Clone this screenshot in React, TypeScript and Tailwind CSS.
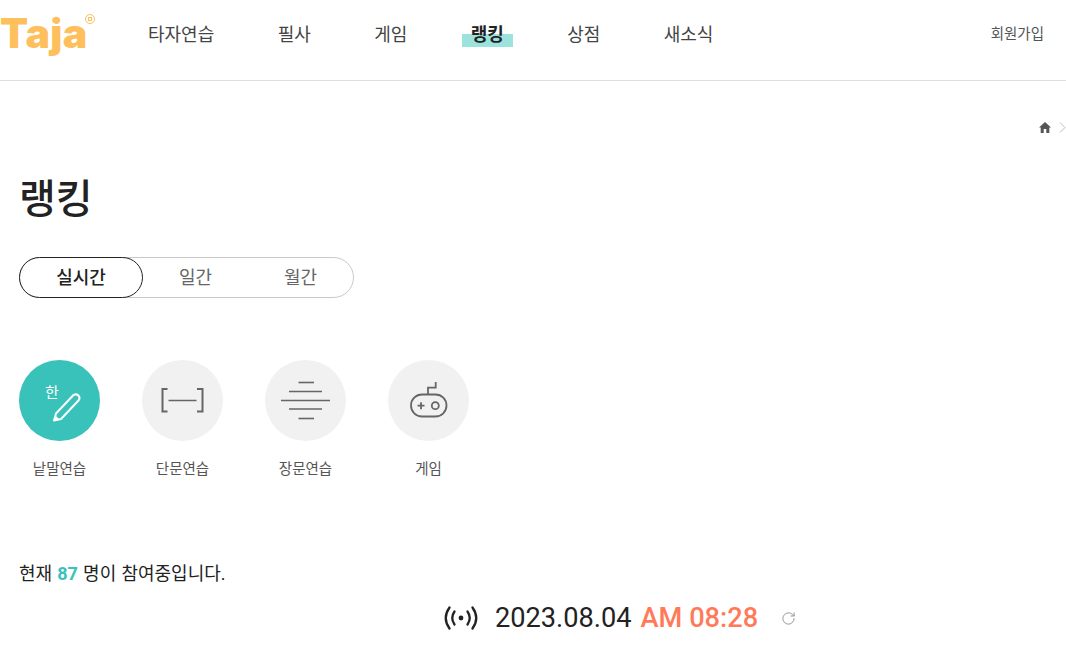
import React from 'react';
import { RotateCw } from 'lucide-react';

const FONT = '[font-family:Roboto,"Noto_Sans_CJK_KR",sans-serif]';

const navItems = ['타자연습', '필사', '게임', '랭킹', '상점', '새소식'];

const PenIcon = () => (
  <svg width="81" height="81" viewBox="0 0 81 81" fill="none">
    <path d="M35 60.5 L37 53.5 L54.5 35 Q57 33.5 59.5 35.5 Q61.5 38 59.5 40.5 L42 59 Z" stroke="#fff" strokeWidth="2" strokeLinejoin="round" />
    <path d="M35 60.5 L36.5 55.5 L40.5 59.5 Z" fill="#fff" />
  </svg>
);

const ShortIcon = () => (
  <svg width="81" height="81" viewBox="0 0 81 81" fill="none" stroke="#666">
    <path d="M25.5 29 H20.5 V51.5 H25.5" strokeWidth="2" />
    <path d="M55 29 H60.5 V51.5 H55" strokeWidth="2" />
    <path d="M26.5 40.5 H54.5" strokeWidth="1.5" />
  </svg>
);

const LongIcon = () => (
  <svg width="81" height="81" viewBox="0 0 81 81" fill="none" stroke="#666" strokeWidth="1.6">
    <path d="M33.5 22.5 H49" />
    <path d="M24 31.5 H57" />
    <path d="M16 40.5 H65" />
    <path d="M24 49 H57" />
    <path d="M33.5 58.5 H49" />
  </svg>
);

const GameIcon = () => (
  <svg width="81" height="81" viewBox="0 0 81 81" fill="none" stroke="#666" strokeWidth="1.8">
    <rect x="23" y="34.5" width="35.5" height="22" rx="11" />
    <path d="M40 34.5 V27.7 H47.7 V22" />
    <path d="M29.5 45.7 H36.5 M33 42.2 V49.2" />
    <circle cx="47.3" cy="45.7" r="3.5" />
  </svg>
);

const categories = [
  { label: '낱말연습', icon: <PenIcon />, active: true },
  { label: '단문연습', icon: <ShortIcon />, active: false },
  { label: '장문연습', icon: <LongIcon />, active: false },
  { label: '게임', icon: <GameIcon />, active: false },
];

export default function App() {
  return (
    <div className={`${FONT} h-[667px] w-full overflow-hidden bg-white text-[#222]`}>
      <header className="flex h-[81px] items-center border-b border-[#dddddd]">
        <div className="relative -mt-[14px] w-[148px] shrink-0">
          <span className="block text-[41px] leading-none font-black tracking-[0.3px] text-[#fdc05c] [font-family:Inter,sans-serif]">Taja</span>
          <span className="absolute top-[1px] left-[85px] flex h-[10px] w-[10px] items-center justify-center rounded-full border border-[#fdc05c]">
            <span className="h-[4px] w-[4px] border border-[#fdc05c]" />
          </span>
        </div>
        <nav className="-mt-[11px] flex flex-1 items-center gap-[63.4px]">
          {navItems.map((item) =>
            item === '랭킹' ? (
              <span key={item} className="relative text-[18px] leading-[26px] font-bold">
                <span className="absolute top-[12.5px] -right-[9px] -left-[9px] h-[13px] bg-[#9be3dc]" />
                <span className="relative">{item}</span>
              </span>
            ) : (
              <span key={item} className="text-[18px] leading-[26px] text-[#444]">{item}</span>
            )
          )}
        </nav>
        <span className="-mt-[10px] mr-[22px] text-[14.5px] leading-5 text-[#555]">회원가입</span>
      </header>

      <main className="px-[19px]">
        <div className="-mr-[19px] mt-[39px] flex h-[14px] items-center justify-end gap-[8px]">
          <svg width="12" height="11" viewBox="0 0 12 11" fill="#555">
            <path d="M6 0 L12 5.5 H10.3 V11 H7.3 V7 H4.7 V11 H1.7 V5.5 H0 Z" />
          </svg>
          <svg width="7" height="11" viewBox="0 0 7 11" fill="none" stroke="#bbb">
            <path d="M1 0.5 L6 5.5 L1 10.5" />
          </svg>
        </div>

        <h1 className="mt-[37px] text-[40px] leading-[58px] font-medium">랭킹</h1>

        <div className="mt-[28px] flex h-[41px] w-[335px] rounded-full border border-[#c8c8c8]">
          <div className="-my-px -ml-px flex h-[41px] w-[124px] shrink-0 items-center justify-center rounded-full border border-[#222] text-[18px] font-medium">실시간</div>
          <div className="flex w-[105px] shrink-0 items-center justify-center text-[18px] text-[#666]">일간</div>
          <div className="flex w-[105px] shrink-0 items-center justify-center text-[18px] text-[#666]">월간</div>
        </div>

        <div className="mt-[62px] flex gap-[42px]">
          {categories.map((c) => (
            <div key={c.label} className="flex w-[81px] flex-col items-center">
              <div className={`relative h-[81px] w-[81px] rounded-full ${c.active ? 'bg-[#38c2b9]' : 'bg-[#f1f1f1]'}`}>
                {c.active && <span className="absolute top-[23px] left-[26px] text-[15px] leading-5 text-white">한</span>}
                {c.icon}
              </div>
              <span className="mt-[19px] text-[14.5px] leading-5 whitespace-nowrap text-[#555]">{c.label}</span>
            </div>
          ))}
        </div>

        <p className="mt-[82px] text-[18px] leading-6 [word-spacing:0.7px]">
          현재 <b className="font-bold text-[#38c2b9]">87</b> 명이 참여중입니다.
        </p>

        <div className="mt-[13px] flex h-[38px] items-center pl-[424px]">
          <svg width="36" height="26" viewBox="0 0 36 26" fill="none" stroke="#222" strokeWidth="2.3" strokeLinecap="round">
            <circle cx="18" cy="13" r="2.4" fill="#222" stroke="none" />
            <path d="M11.5 6.5 Q7 13 11.5 19.5" />
            <path d="M24.5 6.5 Q29 13 24.5 19.5" />
            <path d="M6.5 2.5 Q-1 13 6.5 23.5" />
            <path d="M29.5 2.5 Q37 13 29.5 23.5" />
          </svg>
          <span className="ml-[16px] text-[27.2px] leading-[38px]">2023.08.04</span>
          <span className="ml-[9px] text-[27.2px] leading-[38px] font-medium text-[#ff7a59]">AM 08:28</span>
          <RotateCw size={15} strokeWidth={1.4} className="ml-[23px] text-[#888]" />
        </div>
      </main>
    </div>
  );
}
